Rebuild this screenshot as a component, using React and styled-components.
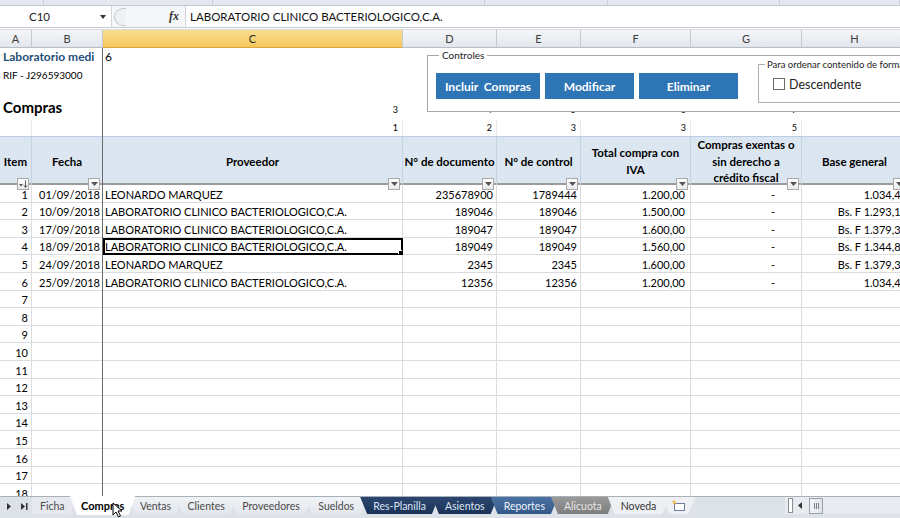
import React from "react";
import styled, { createGlobalStyle } from "styled-components";

const COLS = "32px 71px 300px 94px 84px 110px 111px 106px";
const FONT = `"Lato", "Liberation Sans", sans-serif`;

const GlobalStyle = createGlobalStyle`
  html, body {
    margin: 0;
    padding: 0;
    background: #fff;
    overflow: hidden;
  }
  body {
    font-family: ${FONT};
    color: #000;
  }
`;

const Window = styled.div`
  width: 900px;
  height: 518px;
  display: flex;
  flex-direction: column;
  overflow: hidden;
  position: relative;
  background: #fff;
`;

const RibbonEdge = styled.div`
  height: 5px;
  display: flex;
  background: #e4e9ef;
  border-bottom: 1px solid #c2c8d0;
`;

const RibbonGroup = styled.div`
  width: ${(p) => p.$w}px;
  border-right: 1px solid #c9ced6;
`;

const FormulaBar = styled.div`
  height: 21px;
  display: flex;
  align-items: center;
  background: #f4f6f8;
  border-bottom: 1px solid #c7ccd3;
  font-size: 11.5px;
`;

const NameBox = styled.div`
  width: 112px;
  height: 100%;
  display: flex;
  align-items: center;
  background: #fff;
  border-right: 1px solid #d2d6dc;
  box-sizing: border-box;
  padding-left: 29px;
  padding-right: 5px;
  color: #222;

  span {
    flex: 1;
  }
`;

const Caret = styled.i`
  width: 0;
  height: 0;
  border-left: 3px solid transparent;
  border-right: 3px solid transparent;
  border-top: 4px solid #333;
`;

const Splitter = styled.div`
  width: 11px;
  height: 16px;
  margin-left: 2px;
  border: 1px solid #c3c8cf;
  border-right: none;
  border-radius: 9px 0 0 9px;
  background: #eef0f3;
`;

const FxLabel = styled.div`
  width: 60px;
  padding-right: 6px;
  box-sizing: border-box;
  font-family: "Liberation Serif", serif;
  font-style: italic;
  font-weight: bold;
  font-size: 12px;
  color: #333;
  height: 100%;
  display: flex;
  align-items: center;
  justify-content: flex-end;
  border-right: 1px solid #d2d6dc;
`;

const Formula = styled.div`
  flex: 1;
  height: 100%;
  display: flex;
  align-items: center;
  padding-left: 4px;
  background: #fff;
  color: #111;
`;

const ColHeaders = styled.div`
  display: grid;
  grid-template-columns: ${COLS};
  height: 18px;
  margin-top: 1px;
  border-top: 1px solid #d8dce2;
`;

const ColHead = styled.div`
  display: flex;
  align-items: center;
  justify-content: center;
  font-size: 11px;
  color: ${(p) => (p.$active ? "#2b2b2b" : "#3c3c3c")};
  background: ${(p) =>
    p.$active
      ? "linear-gradient(#f9dd8f, #f3c95c)"
      : "linear-gradient(#f4f6f9, #e2e6eb)"};
  border-right: 1px solid #c5cad1;
  border-bottom: 1px solid ${(p) => (p.$active ? "#e0a53c" : "#b7bdc6")};
`;

const Sheet = styled.div`
  flex: 1;
  position: relative;
  overflow: hidden;

  &::after {
    content: "";
    position: absolute;
    top: 0;
    bottom: 0;
    left: 102px;
    width: 1px;
    background: #6a6a6a;
    z-index: 3;
  }
`;

const Row = styled.div`
  display: grid;
  grid-template-columns: ${COLS};
  height: ${(p) => p.$h}px;
  box-sizing: border-box;
  border-top: ${(p) => p.$top || "none"};
  border-bottom: ${(p) => p.$bottom || "none"};
  background: ${(p) => p.$bg || "transparent"};
`;

const Cell = styled.div`
  position: relative;
  display: flex;
  align-items: ${(p) => p.$v || "flex-end"};
  justify-content: ${(p) =>
    p.$align === "right" ? "flex-end" : p.$align === "center" ? "center" : "flex-start"};
  text-align: ${(p) => p.$align || "left"};
  grid-column: span ${(p) => p.$span || 1};
  box-sizing: border-box;
  padding: 0 ${(p) => p.$pr ?? 3}px ${(p) => p.$pb ?? 1}px ${(p) => p.$pl ?? 2}px;
  font-size: ${(p) => p.$size || 11}px;
  font-weight: ${(p) => (p.$bold ? 700 : 400)};
  color: ${(p) => p.$color || "#000"};
  white-space: nowrap;
  overflow: hidden;
  border-right: 1px solid ${(p) => p.$vline || "transparent"};
  border-bottom: 1px solid ${(p) => p.$hline || "transparent"};
  outline: ${(p) => (p.$selected ? "2px solid #000" : "none")};
  outline-offset: -2px;
  z-index: ${(p) => (p.$selected ? 2 : "auto")};

  ${(p) =>
    p.$selected &&
    `&::after {
      content: "";
      position: absolute;
      right: -3px;
      bottom: -3px;
      width: 5px;
      height: 5px;
      background: #000;
      border: 1px solid #fff;
    }`}
`;

const HeadCell = styled.div`
  position: relative;
  display: flex;
  align-items: center;
  justify-content: center;
  text-align: center;
  padding: 0 1px 6px;
  font-weight: 700;
  font-size: 11.5px;
  line-height: 16.5px;
  white-space: nowrap;
  border-right: 1px solid #c3d2e4;
`;

const FilterBtn = styled.span`
  position: absolute;
  right: 2px;
  bottom: 3px;
  width: 12px;
  height: 12px;
  box-sizing: border-box;
  border: 1px solid #a9a9a9;
  background: linear-gradient(#ffffff, #e9eaec);
  display: flex;
  align-items: center;
  justify-content: center;

  svg {
    display: block;
  }
`;

const Controls = styled.fieldset`
  position: absolute;
  left: 427px;
  top: 1px;
  width: 520px;
  height: 63px;
  margin: 0;
  padding: 0 0 0 8px;
  box-sizing: border-box;
  border: 1px solid #a8a8a8;
  background: #fff;
  display: flex;
  align-items: flex-start;
  gap: 5px;
  z-index: 4;

  legend {
    font-size: 10px;
    padding: 0 3px;
    margin-left: 3px;
    color: #222;
  }
`;

const BlueButton = styled.button`
  width: ${(p) => p.$w}px;
  height: 26px;
  margin-top: 12px;
  border: none;
  background: #2e75b6;
  color: #fff;
  font-family: ${FONT};
  font-weight: 700;
  font-size: 12px;
  padding: 0;
`;

const SortBox = styled.fieldset`
  margin: -2px 0 0 15px;
  width: 170px;
  height: 44px;
  padding: 0 0 4px 0;
  box-sizing: border-box;
  border: 1px solid #b0b0b0;
  display: flex;
  align-items: center;
  gap: 4px;
  font-size: 12.5px;
  color: #222;

  legend {
    font-size: 9.5px;
    padding: 0 2px;
    margin-left: 6px;
    white-space: nowrap;
  }
`;

const CheckBox = styled.span`
  width: 10px;
  height: 10px;
  margin-left: 14px;
  border: 1px solid #6b6b6b;
  background: #fff;
`;

const TabBar = styled.div`
  height: 21px;
  display: flex;
  align-items: flex-start;
  background: #dde2e8;
  border-top: 1px solid #a8b0ba;
  font-size: 10.5px;
  position: relative;
  z-index: 5;
`;

const NavArrows = styled.div`
  width: 32px;
  height: 18px;
  display: flex;
  align-items: center;
  justify-content: space-around;
  padding-left: 2px;
  box-sizing: border-box;
`;

const Tab = styled.div`
  height: ${(p) => (p.$active ? 19 : 17)}px;
  margin-top: ${(p) => (p.$active ? -1 : 0)}px;
  margin-left: -7px;
  padding: 0 ${(p) => p.$pad ?? 12.5}px;
  display: flex;
  align-items: center;
  justify-content: center;
  box-sizing: border-box;
  background: ${(p) => p.$bg || "linear-gradient(#f1f3f6, #e3e7ec)"};
  color: ${(p) => p.$color || "#4a4a4a"};
  font-size: ${(p) => (p.$active ? 11 : 10.5)}px;
  font-weight: ${(p) => (p.$active ? 700 : 400)};
  clip-path: polygon(0 0, 100% 0, calc(100% - 7px) 100%, 7px 100%);
  z-index: ${(p) => (p.$active ? 2 : 1)};
  white-space: nowrap;
`;

const FirstTab = styled(Tab)`
  margin-left: 0;
  padding-left: 8px;
  clip-path: polygon(0 0, 100% 0, calc(100% - 7px) 100%, 0 100%);
`;

const ScrollArea = styled.div`
  margin-left: auto;
  width: 115px;
  height: 17px;
  display: flex;
  align-items: center;
  gap: 4px;
  background: #e8ebef;
`;

const Split = styled.span`
  width: 3px;
  height: 13px;
  border: 1px solid #8a8f96;
  background: #fff;
  margin-left: 3px;
`;

const Thumb = styled.span`
  width: 12px;
  height: 14px;
  margin-left: 3px;
  border: 1px solid #9aa1aa;
  background: linear-gradient(90deg, #f2f4f7, #dfe3e8);
  display: flex;
  align-items: center;
  justify-content: center;
  gap: 1px;

  i {
    width: 1px;
    height: 6px;
    background: #7c838c;
  }
`;

const Cursor = styled.svg`
  position: absolute;
  left: 112px;
  bottom: 0;
  z-index: 6;
`;

const Tri = ({ color = "#555" }) => (
  <svg width="7" height="4" viewBox="0 0 7 4">
    <path d="M0 0 H7 L3.5 4 Z" fill={color} />
  </svg>
);

const SortIcon = () => (
  <svg width="9" height="8" viewBox="0 0 9 8">
    <path d="M0 4 H4 L2 6.5 Z" fill="#555" />
    <path d="M6.5 0.5 V7 M5 5.5 L6.5 7.5 L8 5.5" stroke="#555" strokeWidth="1" fill="none" />
  </svg>
);

const GRID = "#dadcdd";

const headers = [
  ["Fecha"],
  ["Proveedor"],
  ["N° de documento"],
  ["N° de control"],
  ["Total compra con", "IVA"],
  ["Compras exentas o", "sin derecho a", "crédito fiscal"],
  ["Base general"],
];

const data = [
  ["1", "01/09/2018", "LEONARDO MARQUEZ", "235678900", "1789444", "1.200,00", "1.034,48"],
  ["2", "10/09/2018", "LABORATORIO CLINICO BACTERIOLOGICO,C.A.", "189046", "189046", "1.500,00", "Bs. F 1.293,10"],
  ["3", "17/09/2018", "LABORATORIO CLINICO BACTERIOLOGICO,C.A.", "189047", "189047", "1.600,00", "Bs. F 1.379,31"],
  ["4", "18/09/2018", "LABORATORIO CLINICO BACTERIOLOGICO,C.A.", "189049", "189049", "1.560,00", "Bs. F 1.344,83"],
  ["5", "24/09/2018", "LEONARDO MARQUEZ", "2345", "2345", "1.600,00", "Bs. F 1.379,31"],
  ["6", "25/09/2018", "LABORATORIO CLINICO BACTERIOLOGICO,C.A.", "12356", "12356", "1.200,00", "1.034,48"],
];

const empties = Array.from({ length: 12 }, (_, i) => String(i + 7));

const tabs = [
  { label: "Compras", active: true, bg: "#fff", color: "#000", pad: 11 },
  { label: "Ventas", pad: 11.5 },
  { label: "Clientes", pad: 12 },
  { label: "Proveedores", pad: 12.5 },
  { label: "Sueldos", pad: 13 },
  { label: "Res-Planilla", bg: "linear-gradient(#2b4670, #1c3357)", color: "#dbe6f5", pad: 13 },
  { label: "Asientos", bg: "linear-gradient(#2b4670, #1c3357)", color: "#dbe6f5", pad: 13 },
  { label: "Reportes", bg: "linear-gradient(#4a72a3, #33598a)", color: "#eef3fa", pad: 13 },
  { label: "Alicuota", bg: "linear-gradient(#9a9a9a, #7d7d7d)", color: "#e6e6e6", pad: 13 },
  { label: "Noveda", bg: "#eef0f3", color: "#333", pad: 13 },
];

const smallNum = { $align: "right", $size: 9, $pr: 4 };

const App = () => {
  return (
    <Window>
      <GlobalStyle />
      <RibbonEdge>
        <RibbonGroup $w={44} />
        <RibbonGroup $w={171} />
        <RibbonGroup $w={276} />
        <RibbonGroup $w={124} />
        <RibbonGroup $w={174} />
        <RibbonGroup $w={121} />
      </RibbonEdge>

      <FormulaBar>
        <NameBox>
          <span>C10</span>
          <Caret />
        </NameBox>
        <Splitter />
        <FxLabel>fx</FxLabel>
        <Formula>LABORATORIO CLINICO BACTERIOLOGICO,C.A.</Formula>
      </FormulaBar>

      <ColHeaders>
        {["A", "B", "C", "D", "E", "F", "G", "H"].map((c) => (
          <ColHead key={c} $active={c === "C"}>
            {c}
          </ColHead>
        ))}
      </ColHeaders>

      <Sheet>
        <Row $h={19}>
          <Cell $span={2} $bold $size={12} $color="#1f4e79" $pl={3} $pb={2}>
            Laboratorio medi
          </Cell>
          <Cell $size={12} $pb={2}>6</Cell>
        </Row>
        <Row $h={17}>
          <Cell $span={2} $size={10} $pl={3} $pb={2}>
            RIF - J296593000
          </Cell>
        </Row>
        <Row $h={12} />
        <Row $h={24}>
          <Cell $span={2} $bold $size={15} $pl={3} $v="center">
            Compras
          </Cell>
          <Cell {...smallNum} $pb={4}>3</Cell>
          <Cell {...smallNum} $pb={4}>4</Cell>
          <Cell {...smallNum} $pb={4}>5</Cell>
          <Cell {...smallNum} $pb={4}>6</Cell>
          <Cell {...smallNum} $pb={4}>7</Cell>
        </Row>
        <Row $h={16}>
          <Cell $vline="#e9eaeb" />
          <Cell $vline="#e9eaeb" />
          <Cell {...smallNum} $vline="#e9eaeb" $v="center">1</Cell>
          <Cell {...smallNum} $vline="#e9eaeb" $v="center">2</Cell>
          <Cell {...smallNum} $vline="#e9eaeb" $v="center">3</Cell>
          <Cell {...smallNum} $vline="#e9eaeb" $v="center">3</Cell>
          <Cell {...smallNum} $vline="#e9eaeb" $v="center">5</Cell>
        </Row>

        <Row $h={49} $bg="#dce6f1" $top="1px solid #b8cce4" $bottom="2px solid #9b9b9b">
          <HeadCell>
            Item
            <FilterBtn>
              <SortIcon />
            </FilterBtn>
          </HeadCell>
          {headers.map((lines) => (
            <HeadCell key={lines[0]}>
              <div>
                {lines.map((l, i) => (
                  <React.Fragment key={l}>
                    {i > 0 && <br />}
                    {l}
                  </React.Fragment>
                ))}
              </div>
              <FilterBtn>
                <Tri />
              </FilterBtn>
            </HeadCell>
          ))}
        </Row>

        {data.map(([n, fecha, prov, doc, ctrl, total, base]) => (
          <Row $h={17.6} key={n}>
            <Cell $align="right" $vline={GRID} $hline={GRID}>{n}</Cell>
            <Cell $align="right" $vline={GRID} $hline={GRID} $pr={2}>{fecha}</Cell>
            <Cell $vline={GRID} $hline={GRID} $selected={n === "4"}>{prov}</Cell>
            <Cell $align="right" $vline={GRID} $hline={GRID}>{doc}</Cell>
            <Cell $align="right" $vline={GRID} $hline={GRID}>{ctrl}</Cell>
            <Cell $align="right" $vline={GRID} $hline={GRID} $pr={5}>{total}</Cell>
            <Cell $align="right" $vline={GRID} $hline={GRID} $pr={26}>-</Cell>
            <Cell $align="right" $vline={GRID} $hline={GRID} $pr={0}>{base}</Cell>
          </Row>
        ))}

        {empties.map((n) => (
          <Row $h={17.6} key={n}>
            <Cell $align="right" $vline={GRID} $hline={GRID}>{n}</Cell>
            {Array.from({ length: 7 }, (_, i) => (
              <Cell key={i} $vline={GRID} $hline={GRID} />
            ))}
          </Row>
        ))}

        <Controls>
          <legend>Controles</legend>
          <BlueButton $w={104}>Incluir&nbsp; Compras</BlueButton>
          <BlueButton $w={89}>Modificar</BlueButton>
          <BlueButton $w={99}>Eliminar</BlueButton>
          <SortBox>
            <legend>Para ordenar contenido de forma</legend>
            <CheckBox />
            Descendente
          </SortBox>
        </Controls>
      </Sheet>

      <TabBar>
        <NavArrows>
          <svg width="5" height="7" viewBox="0 0 5 7">
            <path d="M0 0 L4 3.5 L0 7 Z" fill="#333" />
          </svg>
          <svg width="7" height="7" viewBox="0 0 7 7">
            <path d="M0 0 L4 3.5 L0 7 Z M5 0 H6.5 V7 H5 Z" fill="#333" />
          </svg>
        </NavArrows>
        <FirstTab $bg="#e6e9ee">Ficha</FirstTab>
        {tabs.map((t) => (
          <Tab key={t.label} $active={t.active} $bg={t.bg} $color={t.color} $pad={t.pad}>
            {t.label}
          </Tab>
        ))}
        <Tab $bg="#eef0f3" $pad={10}>
          <svg width="13" height="11" viewBox="0 0 13 11">
            <rect x="2.5" y="3.5" width="10" height="7" fill="#fff" stroke="#6d7fa0" />
            <path d="M1 1 L4 4" stroke="#e0a030" strokeWidth="1.5" />
            <circle cx="2" cy="2" r="1.6" fill="#f2c14e" />
          </svg>
        </Tab>
        <ScrollArea>
          <Split />
          <svg width="5" height="7" viewBox="0 0 5 7">
            <path d="M5 0 L1 3.5 L5 7 Z" fill="#333" />
          </svg>
          <Thumb>
            <i />
            <i />
            <i />
          </Thumb>
        </ScrollArea>
      </TabBar>

      <Cursor width="12" height="16" viewBox="0 0 12 16">
        <path d="M1 1 V13 L4 10 L6.5 15 L8.5 14 L6 9 H10 Z" fill="#fff" stroke="#000" strokeWidth="1" />
      </Cursor>
    </Window>
  );
};

export default App;
